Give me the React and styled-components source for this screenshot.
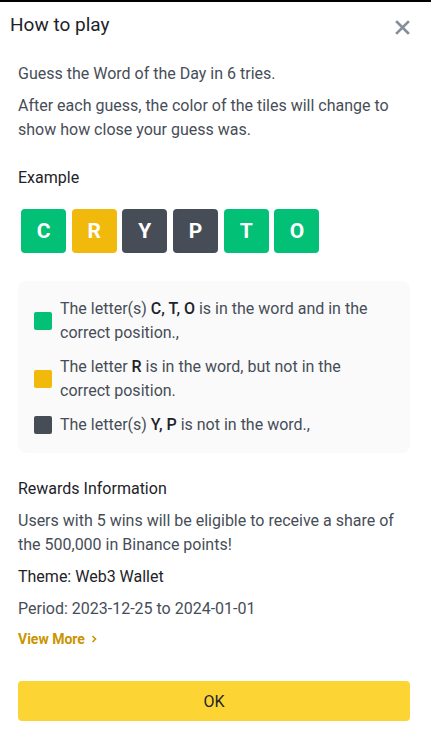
import React from 'react'
import styled, { createGlobalStyle } from 'styled-components'

const GlobalStyle = createGlobalStyle`
  body {
    margin: 0;
    background: #fff;
    font-family: Roboto, 'Liberation Sans', sans-serif;
    color: #1e2329;
  }
`

const tileColors = {
  green: '#02c076',
  yellow: '#f0b90b',
  gray: '#474d57',
}

const tiles = [
  { letter: 'C', tone: 'green' },
  { letter: 'R', tone: 'yellow' },
  { letter: 'Y', tone: 'gray' },
  { letter: 'P', tone: 'gray' },
  { letter: 'T', tone: 'green' },
  { letter: 'O', tone: 'green' },
]

const App = () => {
  return (
    <>
      <GlobalStyle />
      <Modal>
        <Header>
          <Title>How to play</Title>
          <CloseButton aria-label='close'>
            <svg width='15' height='15' viewBox='0 0 15 15'>
              <path d='M2 2 L13 13 M13 2 L2 13' stroke='#848e9c' strokeWidth='2.6' strokeLinecap='square' />
            </svg>
          </CloseButton>
        </Header>
        <Body>
          <Text>Guess the Word of the Day in 6 tries.</Text>
          <Text>After each guess, the color of the tiles will change to show how close your guess was.</Text>
          <SectionTitle>Example</SectionTitle>
          <Tiles>
            {tiles.map((t, i) => (
              <Tile key={i} $tone={t.tone}>{t.letter}</Tile>
            ))}
          </Tiles>
          <Legend>
            <LegendRow>
              <Swatch $tone='green' />
              <span>The letter(s) <b>C, T, O</b> is in the word and in the correct position.,</span>
            </LegendRow>
            <LegendRow>
              <Swatch $tone='yellow' />
              <span>The letter <b>R</b> is in the word, but not in the correct position.</span>
            </LegendRow>
            <LegendRow>
              <Swatch $tone='gray' />
              <span>The letter(s) <b>Y, P</b> is not in the word.,</span>
            </LegendRow>
          </Legend>
          <Rewards>
            <SectionTitle>Rewards Information</SectionTitle>
            <Text>Users with 5 wins will be eligible to receive a share of the 500,000 in Binance points!</Text>
            <Text $dark>Theme: Web3 Wallet</Text>
            <Text>Period: 2023-12-25 to 2024-01-01</Text>
            <ViewMore href='#'>
              View More
              <svg width='8' height='8' viewBox='0 0 8 8'>
                <path d='M2.5 1 L5.5 4 L2.5 7' fill='none' stroke='#c99400' strokeWidth='1.6' />
              </svg>
            </ViewMore>
          </Rewards>
          <OkButton>OK</OkButton>
        </Body>
      </Modal>
    </>
  )
}

const Modal = styled.div`
  width: 431px;
  min-height: 749px;
  border-top: 2px solid #000;
  box-sizing: border-box;
  background: #fff;
`

const Header = styled.div`
  display: flex;
  align-items: center;
  justify-content: space-between;
  height: 44px;
  padding: 0 21px 0 10px;
`

const Title = styled.h2`
  margin: 0;
  font-size: 19px;
  font-weight: 400;
  color: #1e2329;
`

const CloseButton = styled.button`
  border: none;
  background: none;
  padding: 0;
  margin-top: 6px;
  display: flex;
  cursor: pointer;
`

const Body = styled.div`
  padding: 16px 21px 0 18px;
  display: flex;
  flex-direction: column;
`

const Text = styled.p`
  margin: 0 0 8px;
  font-size: 16px;
  line-height: 24px;
  color: ${(p) => (p.$dark ? '#1e2329' : '#474d57')};
`

const SectionTitle = styled.h3`
  margin: 16px 0 0;
  font-size: 16px;
  line-height: 24px;
  font-weight: 400;
  color: #1e2329;
`

const Tiles = styled.div`
  display: flex;
  gap: 5.7px;
  margin: 19px 0 0 3px;
`

const Tile = styled.div`
  width: 45px;
  height: 44px;
  border-radius: 4px;
  background: ${(p) => tileColors[p.$tone]};
  color: #fff;
  font-weight: 700;
  font-size: 21px;
  display: flex;
  align-items: center;
  justify-content: center;
`

const Legend = styled.div`
  margin-top: 28px;
  background: #fafafa;
  border-radius: 8px;
  padding: 16px;
  display: flex;
  flex-direction: column;
  gap: 10px;
`

const LegendRow = styled.div`
  display: flex;
  align-items: center;
  gap: 8px;
  font-size: 16px;
  line-height: 24px;
  color: #474d57;
  b {
    font-weight: 500;
    color: #1e2329;
  }
`

const Swatch = styled.span`
  flex: none;
  width: 18px;
  height: 18px;
  border-radius: 2px;
  background: ${(p) => tileColors[p.$tone]};
`

const Rewards = styled.div`
  margin-top: 8px;
  display: flex;
  flex-direction: column;
  h3 {
    margin-bottom: 8px;
  }
`

const ViewMore = styled.a`
  display: flex;
  align-items: center;
  gap: 5px;
  font-size: 14px;
  line-height: 20px;
  font-weight: 700;
  color: #c99400;
  text-decoration: none;
`

const OkButton = styled.button`
  margin-top: 32px;
  height: 40px;
  border: none;
  border-radius: 4px;
  background: #fcd535;
  font-family: inherit;
  font-size: 16px;
  font-weight: 400;
  color: #1e2329;
  cursor: pointer;
`

export default App
